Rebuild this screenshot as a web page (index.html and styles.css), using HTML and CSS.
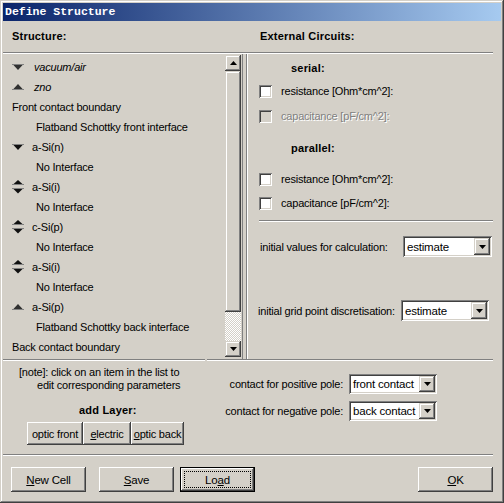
FILE: index.html
```html
<!DOCTYPE html>
<html>
<head>
<meta charset="utf-8">
<title>Define Structure</title>
<link rel="stylesheet" href="styles.css">
</head>
<body>
<div class="window">
  <div class="titlebar">Define Structure</div>
  <div class="body">
    <div class="heads">
      <div class="head head-left">Structure:</div>
      <div class="head">External Circuits:</div>
    </div>
    <div class="hsep"></div>
    <div class="panes">
      <div class="left-pane">
        <ul class="list">
          <li class="item layer"><span class="ico"><svg width="12" height="7" viewBox="0 0 12 7"><polygon points="0.5,0 11.5,0 6,6" fill="#303030"/><rect x="0" y="0" width="12" height="1" fill="#808080"/></svg></span><i class="it">vacuum/air</i></li>
          <li class="item layer"><span class="ico"><svg width="12" height="7" viewBox="0 0 12 7"><polygon points="6,0 11.5,6 0.5,6" fill="#303030"/><rect x="0" y="5" width="12" height="1" fill="#808080"/></svg></span><i class="it">zno</i></li>
          <li class="item boundary">Front contact boundary</li>
          <li class="item iface">Flatband Schottky front interface</li>
          <li class="item layer"><span class="ico"><svg width="12" height="7" viewBox="0 0 12 7"><polygon points="0.5,0 11.5,0 6,6" fill="#101010"/><rect x="0" y="0" width="12" height="1" fill="#808080"/></svg></span>a-Si(n)</li>
          <li class="item iface">No Interface</li>
          <li class="item layer"><span class="ico"><svg width="12" height="14" viewBox="0 0 12 14"><polygon points="6,0 11.5,5 0.5,5" fill="#101010"/><rect x="0" y="4" width="12" height="1" fill="#808080"/><polygon points="0.5,8 11.5,8 6,13.5" fill="#101010"/><rect x="0" y="8" width="12" height="1" fill="#808080"/></svg></span>a-Si(i)</li>
          <li class="item iface">No Interface</li>
          <li class="item layer"><span class="ico"><svg width="12" height="14" viewBox="0 0 12 14"><polygon points="6,0 11.5,5 0.5,5" fill="#101010"/><rect x="0" y="4" width="12" height="1" fill="#808080"/><polygon points="0.5,8 11.5,8 6,13.5" fill="#101010"/><rect x="0" y="8" width="12" height="1" fill="#808080"/></svg></span>c-Si(p)</li>
          <li class="item iface">No Interface</li>
          <li class="item layer"><span class="ico"><svg width="12" height="14" viewBox="0 0 12 14"><polygon points="6,0 11.5,5 0.5,5" fill="#101010"/><rect x="0" y="4" width="12" height="1" fill="#808080"/><polygon points="0.5,8 11.5,8 6,13.5" fill="#101010"/><rect x="0" y="8" width="12" height="1" fill="#808080"/></svg></span>a-Si(i)</li>
          <li class="item iface">No Interface</li>
          <li class="item layer"><span class="ico"><svg width="12" height="7" viewBox="0 0 12 7"><polygon points="6,0 11.5,6 0.5,6" fill="#303030"/><rect x="0" y="5" width="12" height="1" fill="#808080"/></svg></span>a-Si(p)</li>
          <li class="item iface">Flatband Schottky back interface</li>
          <li class="item boundary">Back contact boundary</li>
        </ul>
        <div class="scrollbar">
          <div class="sb-btn raised"><svg width="7" height="4" viewBox="0 0 7 4"><polygon points="3.5,0 7,4 0,4" fill="#000"/></svg></div>
          <div class="sb-thumb raised"></div>
          <div class="sb-track"></div>
          <div class="sb-btn raised"><svg width="7" height="4" viewBox="0 0 7 4"><polygon points="0,0 7,0 3.5,4" fill="#000"/></svg></div>
        </div>
        <div class="vsep"></div>
      </div>
      <div class="right-pane">
        <div class="group-title g-serial">serial:</div>
        <div class="check-row r1"><span class="checkbox"></span><span class="check-label">resistance [Ohm*cm^2]:</span></div>
        <div class="check-row r2 disabled"><span class="checkbox"></span><span class="check-label">capacitance [pF/cm^2]:</span></div>
        <div class="group-title g-parallel">parallel:</div>
        <div class="check-row r3"><span class="checkbox"></span><span class="check-label">resistance [Ohm*cm^2]:</span></div>
        <div class="check-row r4"><span class="checkbox"></span><span class="check-label">capacitance [pF/cm^2]:</span></div>
        <div class="hsep rsep"></div>
        <div class="select-row s1">
          <span class="select-label">initial values for calculation:</span>
          <div class="select sel-big"><span class="sel-val">estimate</span><span class="sel-arrow raised"><svg width="7" height="4" viewBox="0 0 7 4"><polygon points="0,0 7,0 3.5,4" fill="#000"/></svg></span></div>
        </div>
        <div class="select-row s2">
          <span class="select-label">initial grid point discretisation:</span>
          <div class="select sel-big sel-w88"><span class="sel-val">estimate</span><span class="sel-arrow raised"><svg width="7" height="4" viewBox="0 0 7 4"><polygon points="0,0 7,0 3.5,4" fill="#000"/></svg></span></div>
        </div>
      </div>
    </div>
    <div class="lower">
      <div class="lower-left">
        <p class="note"><span class="note-l1">[note]: click on an item in the list to</span><span class="note-l2">edit corresponding parameters</span></p>
        <div class="add-title">add Layer:</div>
        <div class="add-buttons">
          <button class="btn small-btn w56">optic front</button><button class="btn small-btn w48"><u>e</u>lectric</button><button class="btn small-btn w53"><u>o</u>ptic back</button>
        </div>
      </div>
      <div class="lower-right">
        <span class="pole-label">contact for positive pole:</span>
        <div class="select sel-small"><span class="sel-val">front contact</span><span class="sel-arrow raised"><svg width="7" height="4" viewBox="0 0 7 4"><polygon points="0,0 7,0 3.5,4" fill="#000"/></svg></span></div>
        <span class="pole-label">contact for negative pole:</span>
        <div class="select sel-small"><span class="sel-val">back contact</span><span class="sel-arrow raised"><svg width="7" height="4" viewBox="0 0 7 4"><polygon points="0,0 7,0 3.5,4" fill="#000"/></svg></span></div>
      </div>
    </div>
    <div class="hsep"></div>
    <div class="buttons">
      <button class="btn big-btn b-new"><u>N</u>ew Cell</button>
      <button class="btn big-btn b-save"><u>S</u>ave</button>
      <button class="btn big-btn b-load default">Lo<u>a</u>d</button>
      <button class="btn big-btn b-ok"><u>O</u>K</button>
    </div>
  </div>
</div>
</body>
</html>
```

FILE: styles.css
```css
* { box-sizing: border-box; margin: 0; padding: 0; }
html, body { margin: 0; background: #d4d0c8; }
body {
  font-family: "Liberation Sans", Arial, sans-serif;
  font-size: 11px;
  letter-spacing: -0.2px;
  color: #000;
}
.window {
  width: 504px;
  height: 503px;
  padding: 3px;
  background: #d4d0c8;
  box-shadow: inset -1px -1px #404040, inset 1px 1px #d4d0c8, inset -2px -2px #808080, inset 2px 2px #fff;
  overflow: hidden;
}
.titlebar {
  height: 18px;
  line-height: 18px;
  padding-left: 2px;
  color: #fff;
  font-family: "Liberation Mono", monospace;
  font-weight: bold;
  font-size: 11.5px;
  letter-spacing: 0;
  background: linear-gradient(to right, #0a246a, #a6caf0);
}
.body { padding-right: 8px; }
.heads { height: 31px; display: flex; padding-top: 9px; }
.head { font-weight: bold; letter-spacing: 0.2px; line-height: 13px; }
.head-left { width: 257px; padding-left: 9px; }
.hsep { height: 2px; border-top: 1px solid #808080; border-bottom: 1px solid #fff; }

.panes { display: flex; height: 305px; }
.left-pane { display: flex; width: 245px; }
.list { list-style: none; width: 222px; padding-top: 3px; }
.item { height: 20px; display: flex; align-items: center; white-space: nowrap; line-height: 13px; }
.item.layer { padding-left: 9px; }
.ico { width: 12px; margin-right: 8px; display: flex; align-items: center; }
.it { font-style: italic; margin-left: 2px; }
.item.iface { padding-left: 33px; }
.item.boundary { padding-left: 9px; }

.raised {
  background: #d4d0c8;
  box-shadow: inset -1px -1px #404040, inset 1px 1px #d4d0c8, inset -2px -2px #808080, inset 2px 2px #fff;
}
.scrollbar { width: 16px; margin-top: 1px; height: 302px; display: flex; flex-direction: column; }
.sb-btn { height: 16px; display: flex; align-items: center; justify-content: center; flex: none; }
.sb-thumb { height: 241px; flex: none; }
.sb-track { flex: 1; background: repeating-conic-gradient(#fff 0 25%, #d4d0c8 0 50%) 0 0 / 2px 2px; }
.vsep {
  width: 6px;
  margin-left: 1px;
  border-left: 1px solid #808080;
  border-right: 1px solid #fff;
  box-shadow: inset -1px 0 #808080;
}

.right-pane { flex: 1; padding-left: 11px; }
.group-title { font-weight: bold; letter-spacing: 0.2px; line-height: 13px; height: 13px; padding-left: 32px; }
.g-serial { margin-top: 8px; }
.g-parallel { margin-top: 19px; }
.check-row { display: flex; align-items: center; height: 13px; line-height: 13px; }
.r1 { margin-top: 10px; }
.r2 { margin-top: 12px; }
.r3 { margin-top: 18px; }
.r4 { margin-top: 11px; }
.checkbox {
  width: 13px; height: 13px; flex: none;
  background: #fff;
  box-shadow: inset 1px 1px #808080, inset -1px -1px #fff, inset 2px 2px #404040, inset -2px -2px #d4d0c8;
}
.check-label { margin-left: 9px; }
.disabled .checkbox { background: #d4d0c8; }
.disabled .check-label { color: #808080; text-shadow: 1px 1px 0 #fff; }
.rsep { margin-top: 10px; }

.select-row { display: flex; align-items: center; }
.s1 { margin-top: 14px; padding-left: 1px; }
.s2 { margin-top: 43px; margin-left: -1px; }
.select-label { width: 143px; flex: none; }
.select {
  display: flex;
  background: #fff;
  padding: 2px;
  box-shadow: inset 1px 1px #808080, inset -1px -1px #fff, inset 2px 2px #404040, inset -2px -2px #d4d0c8;
}
.sel-big { width: 89px; height: 21px; }
.sel-w88 { width: 88px; }
.sel-val { flex: 1; padding-left: 2px; display: flex; align-items: center; white-space: nowrap; overflow: hidden; font-size: 11.5px; }
.sel-arrow { width: 16px; flex: none; display: flex; align-items: center; justify-content: center; }

.lower { display: flex; height: 95px; }
.lower-left, .lower-right {
  border-top: 1px solid #808080;
  box-shadow: inset 0 1px #fff;
}
.lower-left { width: 202px; }
.lower-right {
  flex: 1;
  margin-left: 2px;
  padding-top: 14px;
  display: grid;
  grid-template-columns: 136px 88px;
  column-gap: 6px;
  row-gap: 7px;
  align-content: start;
  align-items: center;
}
.pole-label { text-align: right; white-space: nowrap; }
.sel-small { height: 20px; width: 88px; }

.note { padding-top: 6px; line-height: 13px; }
.note-l1 { display: block; padding-left: 16px; white-space: nowrap; }
.note-l2 { display: block; padding-left: 34px; white-space: nowrap; }
.add-title { margin-top: 12px; padding-left: 76px; font-weight: bold; letter-spacing: 0.2px; line-height: 13px; }
.add-buttons { margin-top: 5px; padding-left: 24px; display: flex; }

.btn {
  font-family: inherit;
  font-size: 11px;
  letter-spacing: -0.2px;
  color: #000;
  border: none;
  background: #d4d0c8;
  box-shadow: inset -1px -1px #404040, inset 1px 1px #fff, inset -2px -2px #808080, inset 2px 2px #d4d0c8;
  display: flex;
  align-items: center;
  justify-content: center;
  white-space: nowrap;
}
.small-btn { height: 23px; }
.w56 { width: 56px; }
.w48 { width: 48px; }
.w53 { width: 53px; }

.buttons { display: flex; margin-top: 11px; }
.big-btn { width: 75px; height: 25px; font-size: 11.5px; }
.b-new { margin-left: 8px; }
.b-save { margin-left: 13px; }
.b-load { margin-left: 6px; }
.b-ok { margin-left: auto; }
.default {
  position: relative;
  box-shadow: inset 0 0 0 1px #000, inset -2px -2px #404040, inset 2px 2px #fff, inset -3px -3px #808080;
}
.default::after {
  content: "";
  position: absolute;
  left: 4px; top: 4px; right: 4px; bottom: 4px;
  border: 1px dotted #000;
}
```
